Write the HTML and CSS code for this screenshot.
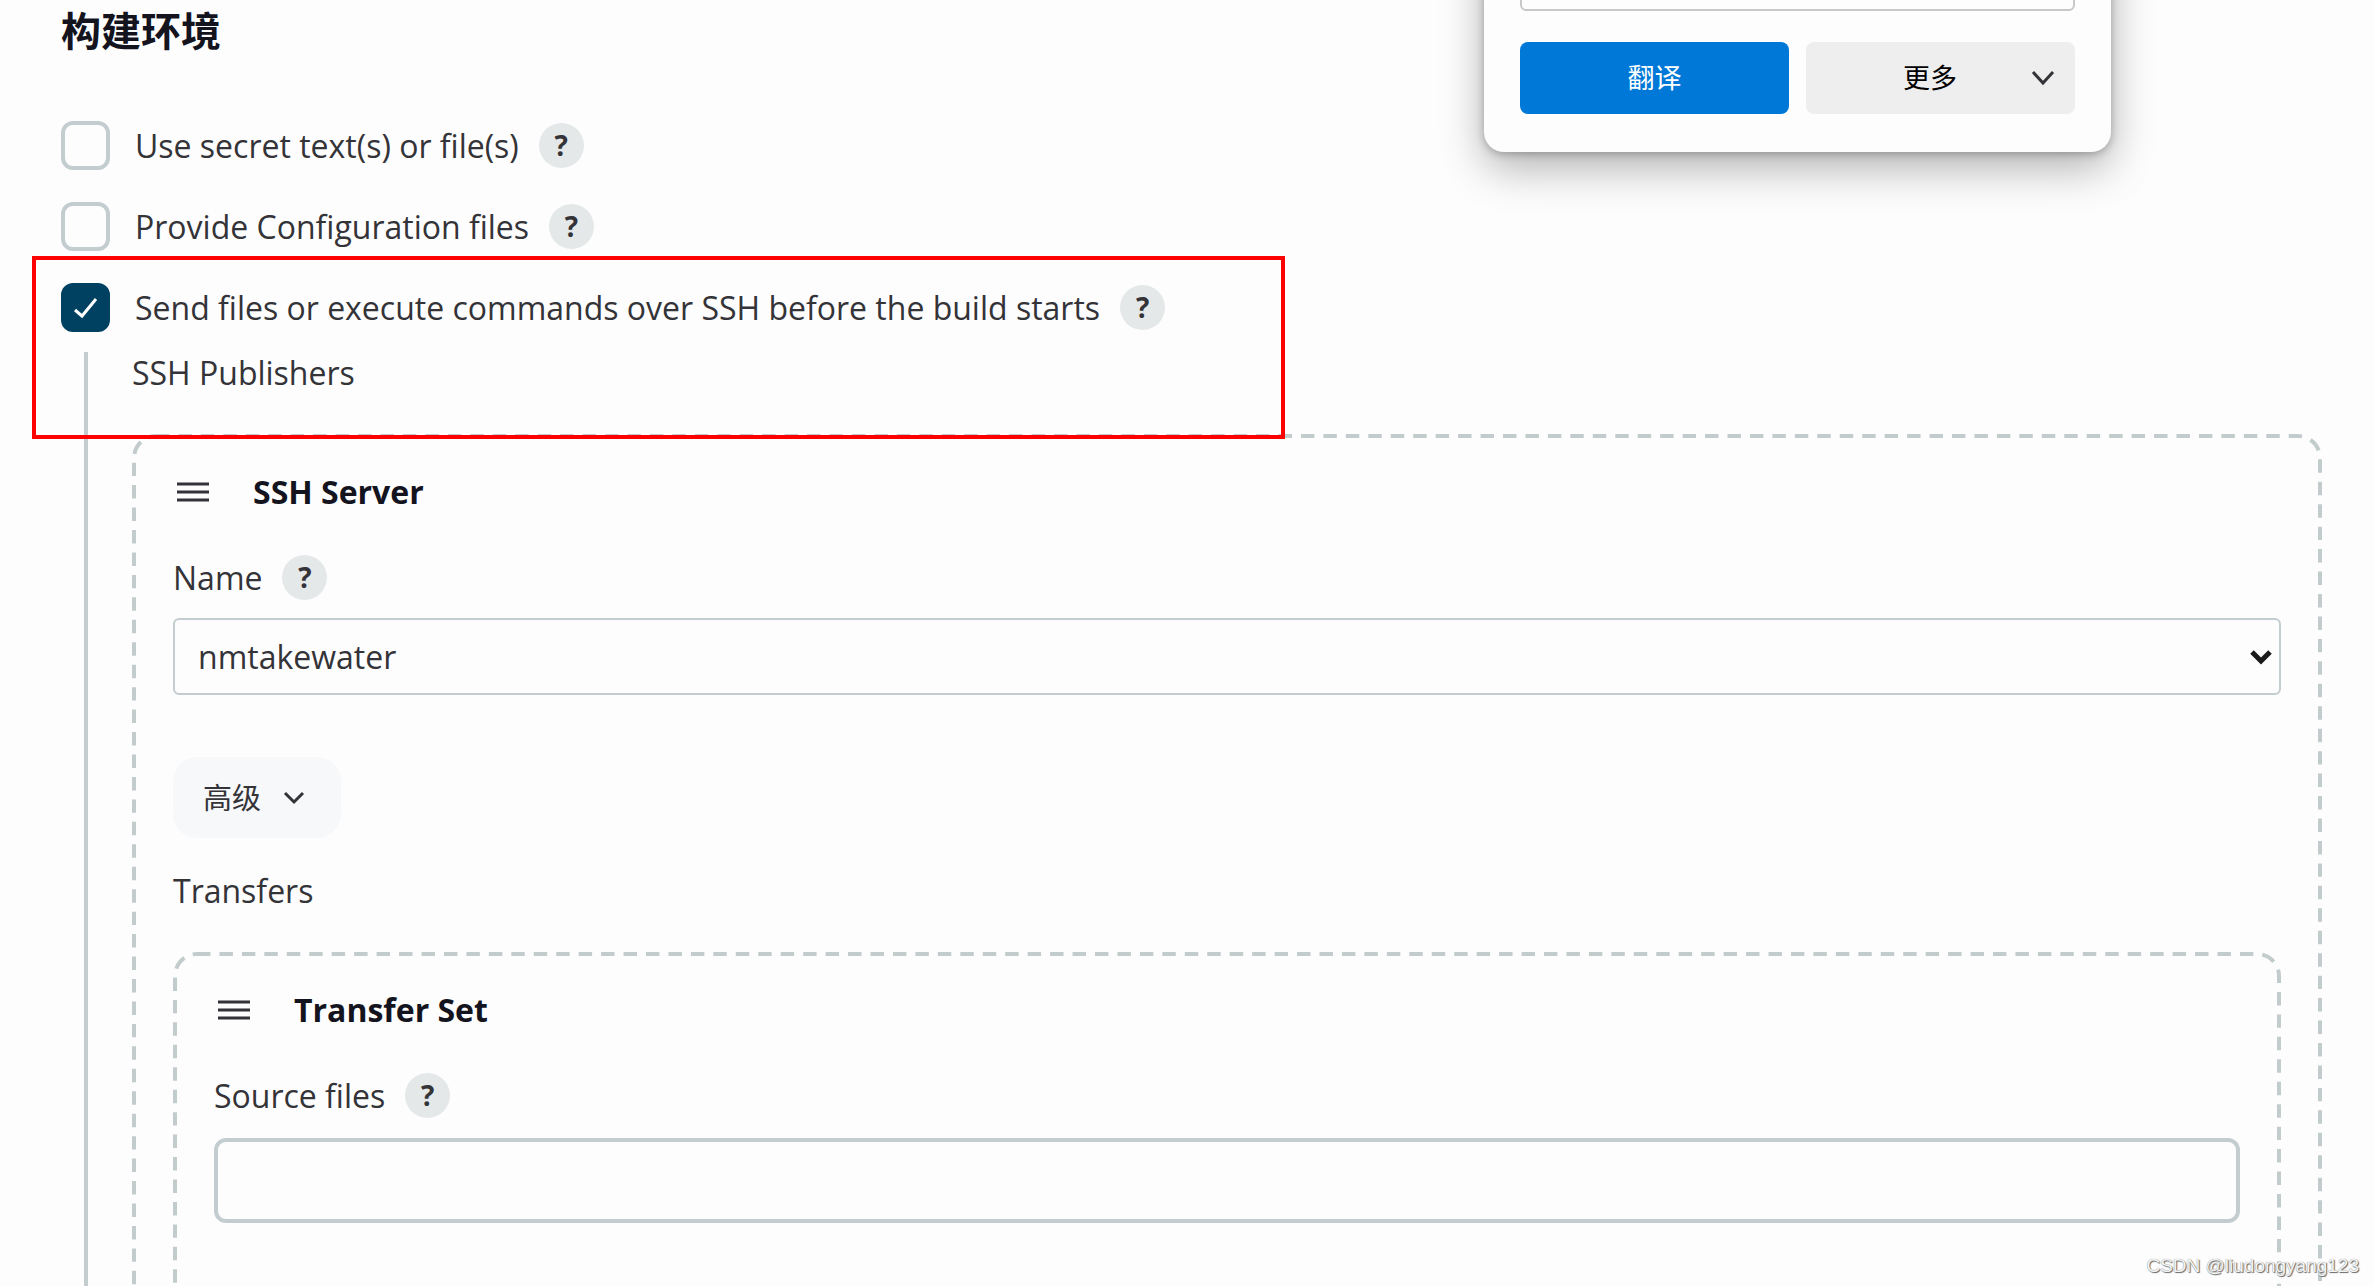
FILE: index.html
```html
<!DOCTYPE html>
<html lang="zh-CN">
<head>
    <meta charset="UTF-8">
    <meta name="viewport" content="width=device-width, initial-scale=1.0">
    <title>构建环境</title>
    <link rel="stylesheet" href="styles.css">
</head>
<body>
    <main class="config">
        <h1>构建环境</h1>

        <div class="option">
            <span class="tick"><input type="checkbox" id="use-secret"></span>
            <label for="use-secret">Use secret text(s) or file(s)</label>
            <button type="button" class="help">?</button>
        </div>
        <div class="option">
            <span class="tick"><input type="checkbox" id="config-files"></span>
            <label for="config-files">Provide Configuration files</label>
            <button type="button" class="help">?</button>
        </div>
        <div class="option">
            <span class="tick">
                <input type="checkbox" id="send-ssh" checked>
                <svg viewBox="0 0 49 49"><path d="M14 27l7 6 14-17"/></svg>
            </span>
            <label for="send-ssh">Send files or execute commands over SSH before the build starts</label>
            <button type="button" class="help">?</button>
        </div>

        <div class="nested">
            <div class="caption">SSH Publishers</div>

            <!-- SSH Server -->
            <section class="panel">
                <svg class="dashes"><rect x="2" y="2" rx="22"/></svg>
                <div class="panel-header">
                    <svg class="drag" viewBox="0 0 34 22"><path d="M1 3h32M1 11h32M1 19h32"/></svg>
                    <h2>SSH Server</h2>
                </div>
                <div class="field-title">
                    <label for="server-name">Name</label>
                    <button type="button" class="help">?</button>
                </div>
                <div class="select-box">
                    <select id="server-name">
                        <option>nmtakewater</option>
                    </select>
                    <svg viewBox="0 0 22 16"><path d="M2 3l9 9 9-9"/></svg>
                </div>
                <button type="button" class="advanced">
                    高级
                    <svg viewBox="0 0 22 16"><path d="M2 3l9 9 9-9"/></svg>
                </button>
                <div class="caption">Transfers</div>

                <!-- Transfer Set -->
                <section class="panel">
                    <svg class="dashes"><rect x="2" y="2" rx="22"/></svg>
                    <div class="panel-header">
                        <svg class="drag" viewBox="0 0 34 22"><path d="M1 3h32M1 11h32M1 19h32"/></svg>
                        <h2>Transfer Set</h2>
                    </div>
                    <div class="field-title">
                        <label for="source-files">Source files</label>
                        <button type="button" class="help">?</button>
                    </div>
                    <input type="text" id="source-files" class="text-box">
                </section>
            </section>
        </div>
    </main>

    <!-- Red frame around the SSH option -->
    <div class="highlight"></div>

    <!-- Translate popup -->
    <div class="popup">
        <input type="text" class="popup-input" aria-label="翻译">
        <div class="popup-buttons">
            <button type="button" class="translate">翻译</button>
            <button type="button" class="more">
                更多
                <svg viewBox="0 0 24 16"><path d="M2 2l10 11L22 2"/></svg>
            </button>
        </div>
    </div>

    <div class="watermark">CSDN @liudongyang123</div>
</body>
</html>
```
FILE: styles.css
```css
* {
    box-sizing: border-box;
}

body {
    font-family: "Open Sans", "Noto Sans CJK SC", sans-serif;
    font-size: 32px;
    line-height: 42px;
    color: #333338;
    background-color: #fdfdfd;
    margin: 0;
    height: 100vh;
    overflow: hidden;
    position: relative;
}

button, input, select {
    font: inherit;
    color: inherit;
    margin: 0;
}

button {
    border: none;
    cursor: pointer;
}

svg {
    fill: none;
    stroke: #333338;
    stroke-width: 3;
}

.config {
    padding: 0 52px 0 61px;
}

h1 {
    font-size: 40px;
    line-height: 62px;
    color: #14141f;
    margin: 0 0 59px;
}

.option {
    display: flex;
    align-items: center;
    height: 49px;
    margin-bottom: 32px;
}

.option label {
    margin-left: 25px;
}

.tick {
    display: grid;
    width: 49px;
    height: 49px;
}

.tick input,
.tick svg {
    grid-area: 1 / 1;
    width: 49px;
    height: 49px;
}

.tick svg {
    stroke: #fff;
    stroke-width: 3;
    pointer-events: none;
}

.tick input {
    appearance: none;
    border: 4px solid #c3cdd0;
    border-radius: 12px;
}

.tick input:checked {
    background-color: #004060;
    border-color: #004060;
}

.help {
    width: 45px;
    height: 45px;
    padding: 0;
    margin-left: 20px;
    border-radius: 50%;
    background-color: #e5e8e8;
    font-size: 28px;
    font-weight: bold;
    line-height: 45px;
}

/* Content of the ticked option */
.nested {
    margin: -12px 0 0 23px;
    border-left: 4px solid #c3cdd0;
    padding-left: 44px;
}

.panel {
    position: relative;
    margin-top: 40px;
    padding: 35px 41px 120px;
}

.dashes {
    position: absolute;
    left: 0;
    top: 0;
    width: 100%;
    height: 100%;
    pointer-events: none;
}

.dashes rect {
    width: calc(100% - 4px);
    height: calc(100% - 4px);
    stroke: #c3cccd;
    stroke-width: 4;
    stroke-dasharray: 13.45 9;
}

.panel-header {
    display: flex;
    align-items: center;
    height: 46px;
    margin-bottom: 40px;
}

.drag {
    width: 34px;
    height: 22px;
    margin: 0 43px 0 3px;
    stroke-width: 3;
}

h2 {
    font-size: 32px;
    line-height: 42px;
    color: #14141f;
    margin: 0;
}

.field-title {
    display: flex;
    align-items: center;
    height: 45px;
    margin-bottom: 18px;
}

.select-box {
    position: relative;
    margin-bottom: 62px;
}

.select-box select {
    display: block;
    appearance: none;
    width: 100%;
    height: 77px;
    padding: 0 60px 0 23px;
    border: 2px solid #c3cdd0;
    border-radius: 6px;
    background-color: #fdfdfd;
}

.select-box svg {
    position: absolute;
    right: 9px;
    top: 31px;
    width: 22px;
    height: 16px;
    stroke: #1a1a1a;
    stroke-width: 5;
    pointer-events: none;
}

.advanced {
    display: flex;
    align-items: center;
    gap: 22px;
    height: 81px;
    padding: 0 36px 0 30px;
    margin-bottom: 32px;
    border-radius: 24px;
    background-color: #f7f8fa;
    font-size: 29px;
}

.advanced svg {
    width: 22px;
    height: 16px;
}

.text-box {
    display: block;
    width: 100%;
    height: 85px;
    margin-top: 20px;
    padding: 0 20px;
    border: 4px solid #c3cdd0;
    border-radius: 12px;
    background-color: #fdfdfd;
}

.highlight {
    position: absolute;
    left: 32px;
    top: 256px;
    width: 1253px;
    height: 183px;
    border: 4px solid #f00;
    pointer-events: none;
}

.popup {
    position: absolute;
    right: 263px;
    top: -60px;
    width: 627px;
    padding: 0 36px 38px;
    border-radius: 20px;
    background-color: #fdfdfd;
    box-shadow: 0 16px 44px rgba(0, 0, 0, 0.3), 0 2px 8px rgba(0, 0, 0, 0.25);
    font-size: 27px;
    color: #000;
}

.popup-input {
    display: block;
    width: 100%;
    height: 71px;
    border: 2px solid #c8c8c8;
    border-radius: 6px;
    background-color: #fdfdfd;
}

.popup-buttons {
    display: grid;
    grid-template-columns: 1fr 1fr;
    gap: 17px;
    margin-top: 31px;
}

.popup-buttons button {
    height: 72px;
    border-radius: 8px;
}

.translate {
    background-color: #0078d7;
    color: #fff;
}

.more {
    display: flex;
    align-items: center;
    justify-content: flex-end;
    gap: 74px;
    padding: 0 20px;
    background-color: #eee;
}

.more svg {
    width: 24px;
    height: 16px;
}

.watermark {
    position: absolute;
    right: 15px;
    bottom: 8px;
    font-family: "Liberation Sans", sans-serif;
    font-size: 19px;
    line-height: 24px;
    color: #f4f4f4;
    text-shadow: 1px 1px 1px #666, 0 0 1px #777;
}
```
